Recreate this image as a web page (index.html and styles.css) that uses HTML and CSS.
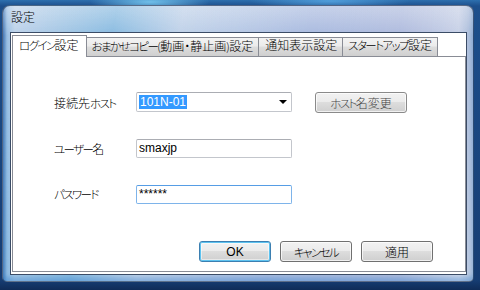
FILE: index.html
```html
<!DOCTYPE html>
<html lang="ja">
<head>
<meta charset="utf-8">
<title>設定</title>
<link rel="stylesheet" href="styles.css">
</head>
<body>
<div class="window">
  <div class="titlebar">設定</div>
  <div class="client">
    <div class="tabs">
      <div class="tab active"><span class="kn">ログイン</span>設定</div>
      <div class="tab"><span class="kn">おまかせコピー</span><span class="pa">(</span>動画・静止画<span class="pa">)</span>設定</div>
      <div class="tab">通知表示設定</div>
      <div class="tab"><span class="kn">スタートアップ</span>設定</div>
    </div>
    <div class="panel">
      <div class="form">
        <div class="label">接続先<span class="kn">ホスト</span></div>
        <div class="combo"><span class="sel">101N-01</span><span class="arrow"></span></div>
        <button class="btn host"><span class="kn">ホスト</span>名変更</button>

        <div class="label"><span class="kn">ユーザー</span>名</div>
        <div class="field">smaxjp</div>
        <div></div>

        <div class="label"><span class="kn">パスワード</span></div>
        <div class="field focus">******</div>
        <div></div>
      </div>
      <div class="actions">
        <button class="btn default">OK</button>
        <button class="btn"><span class="kn">キャンセル</span></button>
        <button class="btn">適用</button>
      </div>
    </div>
  </div>
</div>
</body>
</html>
```

FILE: styles.css
```css
* { box-sizing: border-box; }
html, body { margin: 0; }
body {
  width: 480px;
  height: 290px;
  overflow: hidden;
  padding: 5px 6px 0 2px;
  font-family: "Liberation Sans", "Noto Sans CJK JP", sans-serif;
  font-size: 12px;
  font-weight: 300;
  font-feature-settings: "palt";
  color: #000;
  background:
    radial-gradient(ellipse 60px 10px at 150px 2px, rgba(120,200,240,0.9), transparent),
    radial-gradient(ellipse 80px 8px at 330px 1px, rgba(90,170,230,0.8), transparent),
    linear-gradient(180deg, #2d6fae 0px, #1d4f8c 6px, #163d73 280px, #0f2c58 290px);
}
.kn { font-size: 11.5px; letter-spacing: -1.6px; }
.pa { font-family: "Noto Sans CJK JP", sans-serif; font-size: 11px; letter-spacing: -0.5px; }
.window {
  width: 472px;
  height: 277px;
  border-radius: 8px 8px 5px 5px;
  padding: 0 6px 6px 7px;
  display: flex;
  flex-direction: column;
  border: 1px solid rgba(20,40,70,0.6);
  background:
    linear-gradient(180deg, rgba(255,255,255,0.35) 0, rgba(255,255,255,0) 30px),
    linear-gradient(100deg, rgba(70,140,200,0.0) 0%, rgba(70,160,215,0.45) 22%, rgba(200,220,240,0.2) 35%, rgba(150,170,220,0.4) 60%, rgba(180,190,225,0.3) 85%, rgba(230,235,245,0.4) 100%),
    linear-gradient(90deg, #4b78b2 0, #9cc0e4 4px, #c3d4ea 12px, #b9cbe5 50%, #b0bcdc 85%, #c8d2e6 97%, #8aa6cc 100%);
  box-shadow: inset 0 -4px 4px rgba(40,120,200,0.35);
}
.titlebar {
  height: 26px;
  line-height: 24px;
  padding-left: 1px;
  font-size: 12px;
  flex: none;
}
.client {
  flex: 1;
  background: #fff;
  border: 1px solid #3b4c66;
  padding: 2px 1px 2px 1px;
  display: flex;
  flex-direction: column;
}
.tabs {
  display: flex;
  height: 21px;
  align-items: flex-end;
  position: relative;
  z-index: 1;
}
.tab {
  height: 19px;
  line-height: 17px;
  padding: 0 5px;
  border: 1px solid #898c95;
  border-bottom: none;
  margin-right: -1px;
  background: linear-gradient(180deg, #f3f3f3 0%, #ebebeb 45%, #dddddd 50%, #cfcfcf 100%);
  white-space: nowrap;
}
.tab:nth-child(2) { padding: 0 5px 0 5px; }
.tab:nth-child(3) { padding: 0 5px 0 6px; }
.tab.active {
  height: 22px;
  margin-bottom: -1px;
  line-height: 20px;
  padding: 0 7px 0 6px;
  background: #fff;
  position: relative;
  z-index: 2;
}
.panel {
  flex: 1;
  border: 1px solid #898c95;
  margin-right: -1px;
  padding: 35px 32px 9px 41px;
  display: flex;
  flex-direction: column;
}
.form {
  display: grid;
  grid-template-columns: 82px 156px 23px 92px;
  grid-auto-rows: 20px;
  row-gap: 26px;
  align-items: center;
}
.form > :nth-child(3n) { grid-column: 4; }
.form > .combo, .form > .field { grid-column: 2; }
.combo, .field {
  height: 19px;
  border: 1px solid #c3c6cc;
  border-top-color: #abadb3;
  border-radius: 2px;
  display: flex;
  align-items: center;
  padding-left: 2px;
  background: #fff;
}
.combo { height: 20px; }
.sel {
  background: #3399ff;
  color: #fff;
  line-height: 14px;
  padding: 0 1px;
}
.arrow {
  margin-left: auto;
  margin-right: 4px;
  width: 0; height: 0;
  border-left: 4px solid transparent;
  border-right: 4px solid transparent;
  border-top: 4px solid #000;
}
.field.focus {
  border-color: #7eb4ea;
  border-top-color: #569de5;
}
.btn {
  font-family: inherit;
  font-size: 12px;
  font-weight: 300;
  font-feature-settings: "palt";
  color: #000;
  height: 21px;
  padding: 0;
  border: 1px solid #707070;
  border-radius: 3px;
  background: linear-gradient(180deg, #f2f2f2 0%, #ebebeb 48%, #dddddd 50%, #cfcfcf 100%);
  box-shadow: inset 0 0 0 1px rgba(255,255,255,0.7);
}
.btn.host { width: 92px; color: #444; border-color: #8a8a8a; }
.actions {
  margin-top: auto;
  display: flex;
  justify-content: flex-end;
  gap: 9px;
}
.actions .btn { width: 72px; }
.btn.default {
  border-color: #3c7fb1;
  box-shadow: inset 0 0 0 1px #5ec3f0, inset 0 0 0 2px rgba(255,255,255,0.5);
}
```
